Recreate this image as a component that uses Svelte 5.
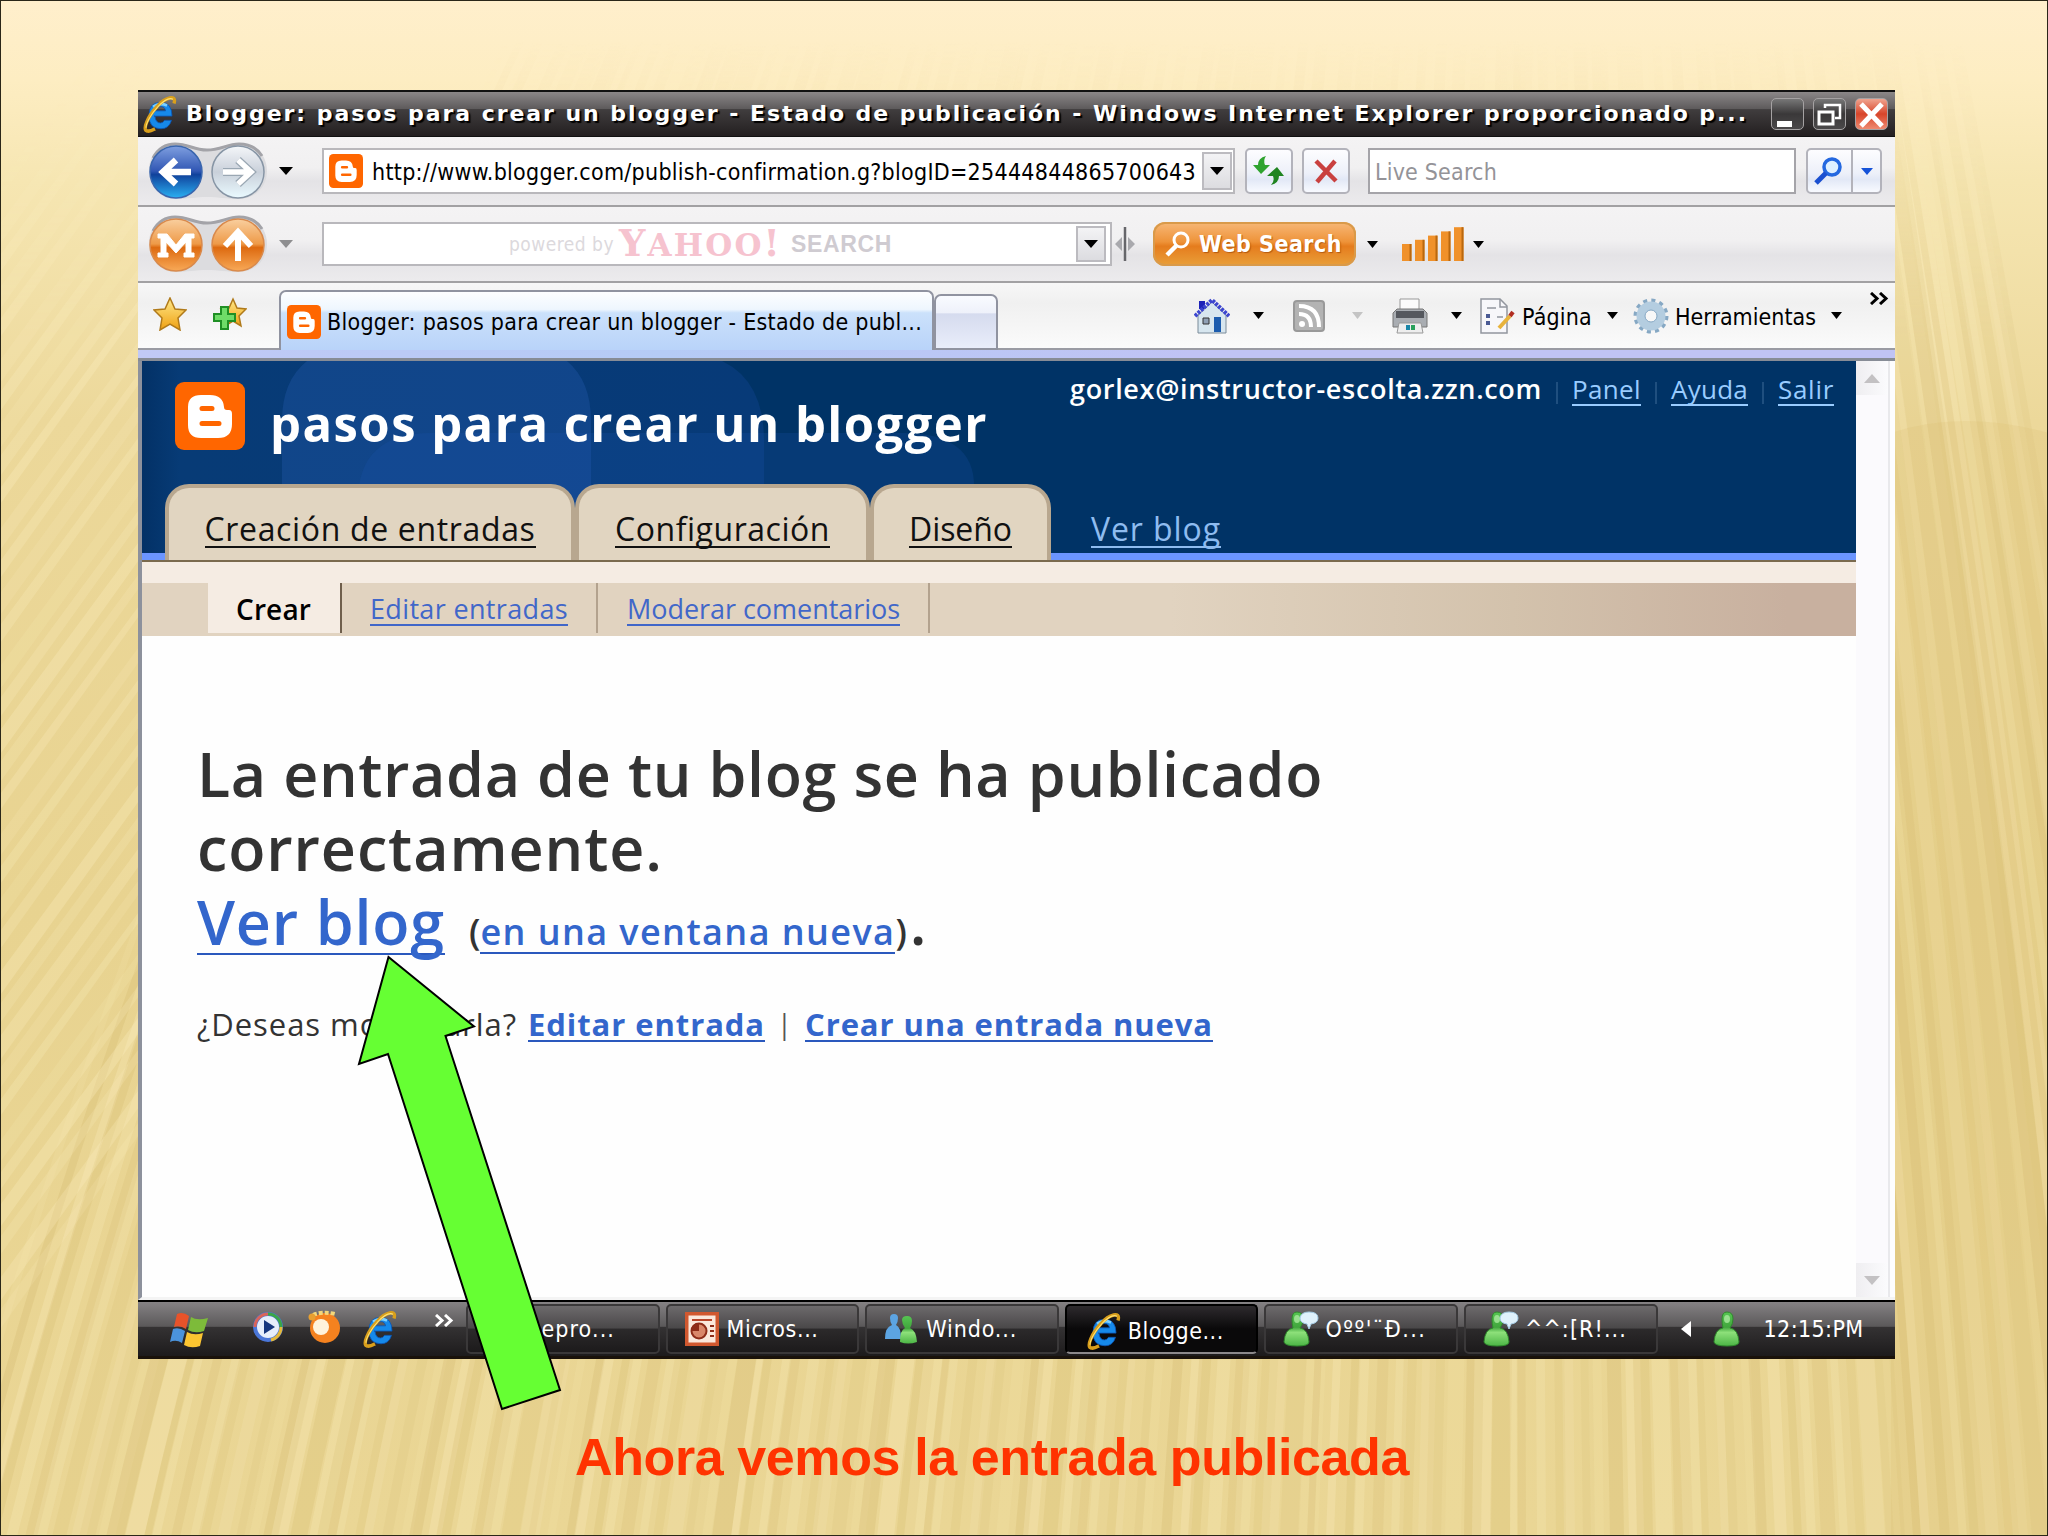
<script>
    // spreads the letters of a label so it takes up exactly `width` pixels
    function fit(node, width) {
        node.style.letterSpacing = '0px';
        const natural = node.getBoundingClientRect().width;
        const spacing = (width - natural) / node.textContent.length;
        node.style.letterSpacing = spacing + 'px';
        node.style.width = width + 'px';
    }

    const tabs = [
        { text: 'Creación de entradas', width: 331, box: 410 },
        { text: 'Configuración', width: 215, box: 295 },
        { text: 'Diseño', width: 103, box: 181 }
    ];

    const tasks = [
        { text: 'Repro...', icon: '', width: 88 },
        { text: 'Micros...', icon: 'ppt', width: 92 },
        { text: 'Windo...', icon: 'people', width: 91 },
        { text: 'Blogge...', icon: 'ie', width: 96, active: true },
        { text: 'Oºº\'¨Đ...', icon: 'chat', width: 101 },
        { text: '^^:[R!...', icon: 'chat', width: 102 }
    ];

    // rays of the slide background, leaning out from the middle of the slide
    const rays = [];
    for (let i = 0; i < 150; i++) {
        const x = -60 + i * 15 + ((i * 37) % 11);
        const lean = x < 1500 ? 560 - x * 0.36 : -(x - 1500) * 0.35;
        rays.push({
            x,
            w: 7 + ((i * 53) % 13),
            top: x + lean,
            bend: x + lean * 0.28,
            light: i % 2 === 0,
            opacity: 0.1 + ((i * 29) % 10) / 60
        });
    }
    // shallow diagonals that fill the upper left corner
    const diagonals = [];
    for (let i = 0; i < 34; i++) {
        diagonals.push({ y: 180 + i * 34 + ((i * 7) % 9), w: 10 + ((i * 5) % 9), opacity: 0.12 + ((i * 3) % 7) / 45 });
    }
</script>

{#snippet ie(w, h)}
    <svg width={w} height={h} viewBox="0 0 36 36" preserveAspectRatio="none">
        <path d="M12 20h18q0-13-11.500-13T7 19.500Q7 32 19 32q8 0 10.500-8h-7q-1.500 2.500-4 2.500-5 0-5.500-6.500zM13 15q1-4 5.500-4t5 4z" fill="#1689ea" stroke="#0b56b5" stroke-width=".8" />
        <path d="M11 11q7-4 14-1" stroke="#7ed0ff" stroke-width="2.500" fill="none" />
        <path d="M32 8c3-9-9-6-17 3C6 20 0 33 5 34c3 1 6-1 8-2" fill="none" stroke="#d99f1c" stroke-width="3.400" />
        <path d="M31 4c-4-2-10 2-15 7C9 18 4 27 4 31" fill="none" stroke="#ffe375" stroke-width="1" />
    </svg>
{/snippet}

{#snippet blogger(w, h)}
    <svg width={w} height={h} viewBox="0 0 70 68" preserveAspectRatio="none">
        <rect width="70" height="68" rx="9" fill="#ff6600" />
        <path d="M13 25q0-12 13-12h9q13 0 14 12 0 3 3 3h2q3 0 3 4v10q0 14-14 14H26q-13 0-13-13z" fill="#fff" />
        <path d="M27 26.500h10M27 41.500h17" stroke="#ff6600" stroke-width="5" stroke-linecap="round" />
    </svg>
{/snippet}

{#snippet caret(color)}
    <svg class="caret" width="14" height="8" viewBox="0 0 14 8"><path d="M0 0h14L7 8z" fill={color} /></svg>
{/snippet}

{#snippet chevrons(color)}
    <svg width="19" height="13" viewBox="0 0 19 13"><path d="M1 1l6 5.500-6 5.500M10 1l6 5.500-6 5.500" fill="none" stroke={color} stroke-width="3" /></svg>
{/snippet}

{#snippet buddy(chat)}
    <svg width="36" height="36" viewBox="0 0 36 36">
        <path d="M9 8q0-7 5-7 6 0 6 7 0 5-3 9 8 1 9 14 0 4-12 4T1 31q1-13 9-14Q9 13 9 8z" fill="url(#green)" stroke="#2f8a2c" />
        <ellipse cx="14" cy="8" rx="3" ry="4" fill="#b9f2ac" opacity=".7" />
        {#if chat}
            <path d="M17 7q1-6 9-6 9 0 9 6 0 5-7 6l-2 5-2-5q-7-1-7-6z" fill="#dff1fb" stroke="#a5cde6" />
        {/if}
    </svg>
{/snippet}

{#snippet pill(kind)}
    <svg width="122" height="58" viewBox="0 0 122 58">
        <path d="M2 29C2 11 14 1 28 1c14 0 18 6 32 6S80 1 92 1c16 0 28 12 28 28S108 57 92 57c-12 0-20-2-32-2s-20 2-32 2C14 57 2 45 2 29z" fill="#dcdcdf" />
        <path d="M6 16C12 5 20 2 28 2c14 0 18 6 32 6S80 2 92 2c10 0 18 4 23 12" fill="none" stroke="#a3a3a8" stroke-width="3" />
        <circle cx="29" cy="30" r="26" fill={kind === 'nav' ? 'url(#navblue)' : 'url(#orange)'} stroke={kind === 'nav' ? '#3a66ae' : '#d98a4c'} stroke-width="1.500" />
        <circle cx="91" cy="30" r="26" fill={kind === 'nav' ? 'url(#silver)' : 'url(#orange)'} stroke={kind === 'nav' ? '#8795a5' : '#d98a4c'} stroke-width="1.500" />
        {#if kind === 'nav'}
            <path d="M44 30H18M29 18L16 30l13 12" fill="none" stroke="#fff" stroke-width="6.500" />
            <path d="M76 30h26M91 18l13 12-13 12" fill="none" stroke="#9aa7b3" stroke-width="8" />
            <path d="M76 30h26M91 18l13 12-13 12" fill="none" stroke="#fff" stroke-width="5.500" />
        {:else}
            <path d="M11 19h9l9 11 9-11h9v4h-3v15h3v4H37v-4h2V27L29 38 19 27v11h2v4H11v-4h3V23h-3z" fill="#fff" stroke="#fff" />
            <path d="M91 46V19M78 31l13-14 13 14" fill="none" stroke="#fff" stroke-width="6" />
        {/if}
    </svg>
{/snippet}

<svg class="defs" width="0" height="0">
    <defs>
        <linearGradient id="navblue" x2="0" y2="1">
            <stop offset="0" stop-color="#7f9fe0" /><stop offset=".48" stop-color="#3157b4" />
            <stop offset=".55" stop-color="#10429c" /><stop offset="1" stop-color="#2ab0f2" />
        </linearGradient>
        <linearGradient id="silver" x2="0" y2="1">
            <stop offset="0" stop-color="#f4f6f9" /><stop offset=".5" stop-color="#c9d0da" />
            <stop offset="1" stop-color="#eafaff" />
        </linearGradient>
        <linearGradient id="orange" x2="0" y2="1">
            <stop offset="0" stop-color="#f9cf9f" /><stop offset=".48" stop-color="#ee9a48" />
            <stop offset=".55" stop-color="#dd6a10" /><stop offset="1" stop-color="#f8a957" />
        </linearGradient>
        <linearGradient id="green" x2="0" y2="1">
            <stop offset="0" stop-color="#56c552" /><stop offset=".45" stop-color="#41a63d" />
            <stop offset=".6" stop-color="#8de07a" /><stop offset="1" stop-color="#4cb545" />
        </linearGradient>
        <linearGradient id="gold" x2="0" y2="1">
            <stop offset="0" stop-color="#ffe98a" /><stop offset="1" stop-color="#efa012" />
        </linearGradient>
    </defs>
</svg>

<main>
    <svg class="rays" width="2048" height="1536" viewBox="0 0 2048 1536">
        <defs>
            <linearGradient id="fade" x2="0" y2="1">
                <stop offset="0" stop-color="#000" /><stop offset=".2" stop-color="#fff" />
            </linearGradient>
            <mask id="topfade"><rect y="40" width="2048" height="1500" fill="url(#fade)" /></mask>
        </defs>
        <g mask="url(#topfade)">
            {#each rays as r}
                <path
                    d="M{r.top} 0Q{r.bend} 900 {r.x} 1536h{r.w}Q{r.bend + r.w} 900 {r.top + r.w} 0z"
                    fill={r.light ? '#fff3c8' : '#cfb466'}
                    opacity={r.opacity}
                />
            {/each}
            {#each diagonals as d}
                <path d="M0 {d.y}L140 {d.y - 190}v{d.w}L0 {d.y + d.w + 6}z" fill="#fff3c8" opacity={d.opacity} />
            {/each}
            <path d="M1890 432Q1960 408 2048 432V1536H1890z" fill="#d2b665" opacity=".16" />
        </g>
    </svg>

    <div class="window">
        <header class="titlebar">
            {@render ie(36, 38)}
            <span class="title" use:fit={1562}>Blogger: pasos para crear un blogger - Estado de publicación - Windows Internet Explorer proporcionado p...</span>
            <div class="winbtns">
                <span class="wb"><svg width="32" height="32"><path d="M5 22h15v6H5z" fill="#fff" /></svg></span>
                <span class="wb"><svg width="32" height="32" fill="none" stroke="#fff"><path d="M5 13h14v12H5z" stroke-width="3" /><path d="M11 9V6h15v13h-5" stroke-width="2.500" /></svg></span>
                <span class="wb close"><svg width="32" height="32"><path d="M5 5l21 22M26 5L5 27" stroke="#fff" stroke-width="5" /></svg></span>
            </div>
        </header>

        <div class="bar nav">
            {@render pill('nav')}
            {@render caret('#000')}
            <div class="address">
                {@render blogger(34, 34)}
                <span class="ui" use:fit={824}>http://www.blogger.com/publish-confirmation.g?blogID=25444844865700643</span>
                <span class="drop">{@render caret('#000')}</span>
            </div>
            <span class="btn">
                <svg width="32" height="30" viewBox="0 0 32 30">
                    <path d="M13 0Q5 2 5 9H0l8 9 9-9h-5q-2-5 1-9z" fill="#2fa32f" />
                    <path d="M18 29q8-2 8-9h5l-7-9-10 9h6q2 5-2 9z" fill="#1f8420" />
                </svg>
            </span>
            <span class="btn stop">
                <svg width="28" height="26" viewBox="0 0 28 26"><path d="M4 3l20 20M23 3L5 24" stroke="#c9403f" stroke-width="4.500" /></svg>
            </span>
            <div class="live"><span class="ui" use:fit={122}>Live Search</span></div>
            <div class="btn go">
                <svg width="30" height="30" viewBox="0 0 30 30"><circle cx="18" cy="11" r="8" fill="#dff0ff" stroke="#2468e0" stroke-width="3.500" /><path d="M12 17L2 27" stroke="#1a4fd0" stroke-width="5" /></svg>
                <span class="arrow"><svg width="12" height="7"><path d="M0 0h12L6 7z" fill="#1552d8" /></svg></span>
            </div>
        </div>

        <div class="bar yahoo">
            {@render pill('yahoo')}
            {@render caret('#8e8e90')}
            <div class="ysearch">
                <span class="powered" use:fit={105}>powered by</span>
                <span class="logo" use:fit={163}><b>Y</b>AHOO<b>!</b></span>
                <span class="search" use:fit={101}>SEARCH</span>
                <span class="drop">{@render caret('#000')}</span>
            </div>
            <svg class="split" width="20" height="34" viewBox="0 0 20 34"><path d="M10 0v34" stroke="#66666a" stroke-width="2.500" /><path d="M7 10v14L0 17zM13 10v14l7-7z" fill="#a9a9ad" /></svg>
            <div class="web">
                <svg width="26" height="26" viewBox="0 0 26 26"><circle cx="16" cy="9" r="7" fill="none" stroke="#fff" stroke-width="3" /><path d="M11 15L2 24" stroke="#fff" stroke-width="4.500" /></svg>
                <span use:fit={143}>Web Search</span>
            </div>
            <svg class="c1" width="11" height="7"><path d="M0 0h11L5.500 7z" /></svg>
            <svg class="signal" width="62" height="34" viewBox="0 0 62 34">
                {#each [0, 1, 2, 3, 4] as i}
                    <rect x={i * 13} y={17 - i * 4.2} width="9.500" height={17 + i * 4.2} fill="#f0912a" />
                    <rect x={i * 13 + 7.5} y={17 - i * 4.2} width="2" height={17 + i * 4.2} fill="#b9680f" />
                {/each}
            </svg>
            <svg class="c2" width="11" height="7"><path d="M0 0h11L5.500 7z" /></svg>
        </div>

        <div class="tabrow">
            <div class="favs">
                <svg width="34" height="34" viewBox="0 0 34 34"><path d="M17 1l5 11 11 1-8 8 2 12-10-6-10 6 2-12-8-8 11-1z" fill="url(#gold)" stroke="#b07a1a" stroke-width="1.500" /></svg>
                <svg width="34" height="34" viewBox="0 0 34 34"><path d="M20 2l4 9 9 1-7 7 2 10-8-5-8 5 2-10-6-7 8-1z" fill="url(#gold)" stroke="#b07a1a" stroke-width="1.500" /><path d="M8 10h7v7h7v7h-7v8H8v-8H1v-7h7z" fill="#6fdc68" stroke="#1f8f24" stroke-width="2" /></svg>
            </div>
            <div class="tab">
                {@render blogger(34, 34)}
                <span class="ui" use:fit={595}>Blogger: pasos para crear un blogger - Estado de publ...</span>
            </div>
            <div class="newtab"></div>
            <div class="tools">
                <svg width="36" height="36" viewBox="0 0 36 36"><path d="M5 3h6v8H5z" fill="#1d23b8" /><path d="M4 17L18 4l14 13v18H4z" fill="#d7e6ef" stroke="#7a8b99" /><path d="M1 18L18 2l17 16" fill="none" stroke="#3c46cf" stroke-width="4" stroke-dasharray="3 1" /><path d="M20 19h7v15h-7z" fill="#1c5cae" /><path d="M9 20h6v6H9z" fill="#8fa0b5" stroke="#333" /></svg>
                <svg class="t1" width="11" height="7"><path d="M0 0h11L5.500 7z" /></svg>
                <svg class="t2" width="32" height="32" viewBox="0 0 32 32"><rect x="1" y="1" width="30" height="30" rx="3" fill="#b3b3b3" stroke="#999" stroke-width="2" /><circle cx="9" cy="24" r="3" fill="#fff" /><path d="M6 14q12 0 12 13M6 6q20 0 20 21" fill="none" stroke="#fff" stroke-width="4" /></svg>
                <svg class="t3" width="11" height="7"><path d="M0 0h11L5.500 7z" fill="#c4c4c4" /></svg>
                <svg class="t4" width="36" height="36" viewBox="0 0 36 36"><path d="M8 1h19v13H8z" fill="#fbfbfb" stroke="#999" /><path d="M1 15l4-4h26l4 4v14H1z" fill="#a9adb2" stroke="#777" /><path d="M4 13h28v7H4z" fill="#55585e" /><path d="M7 25h22l2 10H5z" fill="#eee" stroke="#999" /><path d="M14 27h4v5h-4z" fill="#1b86a8" /><path d="M19 27h4v5h-4z" fill="#28a05a" /></svg>
                <svg class="t5" width="11" height="7"><path d="M0 0h11L5.500 7z" /></svg>
                <svg class="t6" width="36" height="36" viewBox="0 0 36 36"><path d="M2 1h19l7 7v27H2z" fill="#f7f7fa" stroke="#92969e" stroke-width="1.500" /><path d="M21 1v8h7M8 10h9M18 19h6" fill="none" stroke="#92969e" stroke-width="1.500" /><path d="M7 16h4v4H7zM7 23h4v4H7z" fill="#4a5a94" /><path d="M31 18L20 30" stroke="#e8b33c" stroke-width="4" /><path d="M34 14l-3 4" stroke="#b02c20" stroke-width="4" /></svg>
                <span class="ui t7" use:fit={70}>Página</span>
                <svg class="t8" width="11" height="7"><path d="M0 0h11L5.500 7z" /></svg>
                <svg class="t9" width="36" height="38" viewBox="0 0 36 38"><circle cx="18" cy="19" r="15.500" fill="none" stroke="#86a8c4" stroke-width="4" stroke-dasharray="4 4.100" /><circle cx="18" cy="19" r="10" fill="none" stroke="#b4cde0" stroke-width="9" /><circle cx="18" cy="19" r="6" fill="#f8f8f8" stroke="#86a8c4" /></svg>
                <span class="ui t10" use:fit={141}>Herramientas</span>
                <svg class="t11" width="11" height="7"><path d="M0 0h11L5.500 7z" /></svg>
                <span class="more">{@render chevrons('#000')}</span>
            </div>
        </div>
        <div class="strip"></div>

        <div class="viewport">
            <div class="page">
                <div class="masthead">
                    <!-- oversized ghost of the logo behind the blog name -->
                    <svg class="ghost" width="860" height="192" viewBox="0 0 860 192">
                        <defs>
                            <linearGradient id="edge"><stop offset="0" stop-color="#033166" /><stop offset=".06" stop-color="#073b76" /><stop offset="1" stop-color="#073a78" /></linearGradient>
                        </defs>
                        <path d="M0 0H580Q622 20 622 80V192H0z" fill="url(#edge)" />
                        <path d="M140 192V60Q140 20 165 0H425Q449 20 449 60V192z" fill="#2157a8" opacity=".4" />
                        <path d="M216 192V140Q216 72 290 72H760Q832 72 832 125V192z" fill="#1a55b0" opacity=".22" />
                    </svg>
                    <div class="top">
                        {@render blogger(70, 68)}
                        <h1 use:fit={718}>pasos para crear un blogger</h1>
                        <div class="account">
                            <b use:fit={472}>gorlex@instructor-escolta.zzn.com</b>
                            <i></i><a use:fit={69} href="#panel">Panel</a>
                            <i></i><a use:fit={77} href="#ayuda">Ayuda</a>
                            <i></i><a use:fit={56} href="#salir">Salir</a>
                        </div>
                    </div>
                    <nav>
                        {#each tabs as t}
                            <div class="mtab" style="width: {t.box}px"><a use:fit={t.width} href="#tab">{t.text}</a></div>
                        {/each}
                        <a class="view" use:fit={130} href="#blog">Ver blog</a>
                    </nav>
                </div>
                <div class="subnav">
                    <div class="cur"><b use:fit={75}>Crear</b></div>
                    <div class="sub"><a use:fit={198} href="#editar">Editar entradas</a></div>
                    <div class="sub"><a use:fit={273} href="#moderar">Moderar comentarios</a></div>
                </div>
                <div class="body">
                    <h2><span use:fit={1126}>La entrada de tu blog se ha publicado</span></h2>
                    <h2><span use:fit={466}>correctamente.</span></h2>
                    <h2 class="see">
                        <a use:fit={248} href="#ver">Ver blog</a><small>(</small><a class="small" use:fit={415} href="#ventana">en una ventana nueva</a><small>)</small><span class="dot">.</span>
                    </h2>
                    <p>
                        <span use:fit={320}>¿Deseas modificarla?</span>
                        <a use:fit={237} href="#entrada">Editar entrada</a>
                        <span class="sep">|</span>
                        <a use:fit={408} href="#nueva">Crear una entrada nueva</a>
                    </p>
                </div>
            </div>
            <div class="scroll">
                <span><svg width="16" height="9"><path d="M8 0l8 9H0z" fill="#c3c1c3" /></svg></span>
                <span><svg width="16" height="9"><path d="M0 0h16L8 9z" fill="#c3c1c3" /></svg></span>
            </div>
        </div>

        <footer class="taskbar">
            <svg class="win" width="40" height="36" viewBox="0 0 40 36"><path d="M8 2q6-3 12 2l-3 13q-6-4-12-2z" fill="#e8532a" /><path d="M22 5q6 4 17 1l-4 13q-9 3-16-1z" fill="#7dbb3a" /><path d="M4 17q6-2 12 2l-3 12q-6-4-12-1z" fill="#4b93dc" /><path d="M18 20q7 4 16 1l-3 13q-9 3-16-1z" fill="#fcc531" /></svg>
            <svg class="wmp" width="32" height="32" viewBox="0 0 32 32"><circle cx="16" cy="16" r="13" fill="#e6eefb" stroke="#4a76d8" stroke-width="4" /><path d="M16 3a13 13 0 0 1 13 13" fill="none" stroke="#3aa648" stroke-width="3" /><path d="M3 16A13 13 0 0 1 16 3" fill="none" stroke="#d9645a" stroke-width="3" /><path d="M29 16a13 13 0 0 1-10 13" fill="none" stroke="#e5b93a" stroke-width="3" /><path d="M12 9l11 7-11 7z" fill="#16367e" /></svg>
            <svg class="orb" width="34" height="34" viewBox="0 0 34 34"><circle cx="18" cy="18" r="15" fill="#f5821f" /><circle cx="14" cy="17" r="8" fill="#fff3dc" /><path d="M6 5q10-4 22-1" fill="none" stroke="#f3d77a" stroke-width="4" stroke-dasharray="4 2" /><circle cx="5" cy="7" r="3.500" fill="#e8a030" /></svg>
            {@render ie(36, 38)}
            <span class="chev">{@render chevrons('#fff')}</span>
            <div class="tasks">
                {#each tasks as t}
                    <div class="task" class:active={t.active}>
                        <span class="ticon">
                            {#if t.icon === 'ppt'}
                                <svg width="34" height="34" viewBox="0 0 34 34"><rect x="1.500" y="1.500" width="31" height="31" fill="#fbe8dc" stroke="#d1582f" stroke-width="4" /><path d="M7 8h20" stroke="#b8452a" stroke-width="2" /><circle cx="14" cy="19" r="7.500" fill="#d9876a" stroke="#8e2c18" stroke-width="2" /><path d="M14 19v-8a8 8 0 0 0-8 8z" fill="#8e2c18" /><path d="M25 14h4M25 19h4M25 24h4" stroke="#8e2c18" stroke-width="2" /></svg>
                            {:else if t.icon === 'people'}
                                <svg width="34" height="32" viewBox="0 0 34 32"><path d="M6 5q0-4 4-4t4 4q0 4-2 7 5 2 5 14H1q0-12 7-14-2-3-2-7z" fill="#5ca4e2" /><path d="M18 7q0-4 5-4t5 5q0 4-2 7 6 2 7 14-9 3-17 0 0-12 5-14-3-4-3-8z" fill="url(#green)" /></svg>
                            {:else if t.icon === 'ie'}
                                {@render ie(36, 38)}
                            {:else if t.icon === 'chat'}
                                {@render buddy(true)}
                            {/if}
                        </span>
                        <span use:fit={t.width}>{t.text}</span>
                    </div>
                {/each}
            </div>
            <svg class="left" width="10" height="16"><path d="M10 0v16L0 8z" fill="#fff" /></svg>
            {@render buddy(false)}
            <span class="clock" use:fit={100}>12:15:PM</span>
        </footer>
    </div>

    <div class="caption" use:fit={834}>Ahora vemos la entrada publicada</div>

    <svg class="pointer" width="206" height="456" viewBox="-1 -1 206 456">
        <path d="M30.500 1L116 70.500 87.500 80 202 434 144 453 30 98 1 108z" fill="#66ff33" stroke="#000" stroke-width="2" />
    </svg>
</main>

<style>
    :global(body) {
        margin: 0;
        overflow: hidden;
    }
    main {
        position: relative;
        box-sizing: border-box;
        width: 2048px;
        height: 1536px;
        padding: 89px 0 0 137px;
        border: 1px solid #2a2618;
        background: linear-gradient(#ffefcc 0, #fdedc2 80px, #f6e6b2 180px, #ecd89a 420px, #e8d390 900px, #ead695 1536px);
        font-family: "DejaVu Sans Condensed", "DejaVu Sans", sans-serif;
        overflow: hidden;
    }
    main span, main a, main b, h1 {
        white-space: pre;
    }
    svg {
        display: block;
        flex: none;
    }
    .defs, .rays, .ghost {
        position: absolute;
        left: 0;
        top: 0;
    }
    .window {
        position: relative;
        width: 1757px;
        height: 1269px;
        display: flex;
        flex-direction: column;
        background: #fff;
    }
    .titlebar {
        display: flex;
        align-items: center;
        box-sizing: border-box;
        height: 47px;
        padding-left: 4px;
        border-top: 2px solid #111;
        border-bottom: 1px solid #111;
        background: linear-gradient(#8b8788, #5e5b5c 38%, #403d3e 40%, #231f20);
    }
    .title {
        margin-left: 8px;
        color: #fff;
        font: bold 22px/42px "DejaVu Sans", sans-serif;
        text-shadow: 2px 2px 1px #000;
    }
    .winbtns {
        display: flex;
        gap: 9px;
        margin-left: 23px;
    }
    .wb {
        width: 31px;
        height: 30px;
        border: 1.5px solid #a5a2a3;
        border-radius: 5px;
        background: linear-gradient(#777, #3a3839 50%, #4b494a);
        overflow: hidden;
    }
    .close {
        background: linear-gradient(#f0a48f, #d8452a 50%, #ee8a70);
    }
    .bar {
        display: flex;
        align-items: center;
        box-sizing: border-box;
        border-bottom: 2px solid #a2a1a3;
        background: linear-gradient(#f4f3f4, #f1f0f1 45%, #e4e3e6 65%, #ecebed);
        padding-left: 9px;
    }
    .nav { height: 70px; }
    .yahoo { height: 76px; }
    .caret { margin-left: 10px; }
    .ui {
        font-size: 23px;
        line-height: 30px;
        color: #000;
    }
    .address, .ysearch, .live {
        display: flex;
        align-items: center;
        box-sizing: border-box;
        height: 46px;
        margin-left: 29px;
        border: 2px solid #b9b8bc;
        background: #fff;
    }
    .address {
        width: 913px;
        padding-left: 5px;
    }
    .address .ui { margin: 2px 0 0 9px; }
    .drop {
        display: flex;
        align-items: center;
        justify-content: center;
        box-sizing: border-box;
        width: 30px;
        height: 38px;
        margin-left: 6px;
        border: 2px solid #bcbbc0;
        background: linear-gradient(#f3f3f5, #dcdce0);
    }
    .drop .caret { margin: 0; }
    .btn {
        display: flex;
        align-items: center;
        justify-content: center;
        box-sizing: border-box;
        width: 48px;
        height: 46px;
        margin-left: 10px;
        border: 2px solid #b3b3bb;
        border-radius: 5px;
        background: linear-gradient(#fdfdff, #edf0f9 55%, #e2e8f6 70%, #f8faff);
    }
    .stop { margin-left: 9px; }
    .live {
        width: 428px;
        margin-left: 18px;
        padding-left: 5px;
        border-color: #a5a4a9;
    }
    .live .ui {
        margin-top: 2px;
        color: #949398;
    }
    .go {
        width: 76px;
        justify-content: flex-start;
        padding-left: 6px;
    }
    .arrow {
        display: flex;
        align-items: center;
        justify-content: center;
        width: 28px;
        height: 42px;
        margin-left: 7px;
        border-left: 2px solid #b3b3bb;
    }
    .ysearch {
        width: 790px;
        height: 44px;
        padding-left: 185px;
    }
    .ysearch .drop {
        margin-left: 184px;
        height: 36px;
    }
    .powered {
        color: #dcd9dd;
        font-size: 19px;
    }
    .logo {
        margin-left: 5px;
        color: #f6c3cf;
        font: bold 31px/40px "DejaVu Serif", serif;
    }
    .logo b { font-size: 37px; }
    .search {
        margin-left: 9px;
        color: #cfcbd1;
        font: bold 23px/40px "Liberation Sans", sans-serif;
    }
    .split { margin-left: 3px; }
    .web {
        display: flex;
        align-items: center;
        box-sizing: border-box;
        width: 203px;
        height: 44px;
        margin-left: 18px;
        padding-left: 12px;
        border-radius: 12px;
        background: linear-gradient(#f7b878, #ee9339 45%, #e57c1d 55%, #e9a03a);
        box-shadow: inset 0 0 0 2px #d99a4a;
        color: #fff;
        font-weight: bold;
        font-size: 23px;
        text-shadow: 1px 1px 1px #b55a10;
    }
    .web span { margin-left: 8px; }
    .c1 { margin-left: 11px; }
    .signal { margin-left: 24px; }
    .c2 { margin-left: 9px; }
    .tabrow {
        display: flex;
        height: 67px;
        background: linear-gradient(#f7f7f7, #f0f0f0 30%, #fbfbfb);
    }
    .favs {
        display: flex;
        align-items: center;
        gap: 26px;
        box-sizing: border-box;
        width: 141px;
        padding: 0 0 3px 15px;
        border-bottom: 2px solid #9a9ba3;
    }
    .tab {
        display: flex;
        align-items: center;
        box-sizing: border-box;
        width: 655px;
        margin-top: 7px;
        padding: 2px 0 0 6px;
        border: 2px solid #9093a0;
        border-bottom: 0;
        border-radius: 7px 7px 0 0;
        background: linear-gradient(#fdfeff, #eef6fe 30%, #cbe1fb 36%, #b9d3f9);
    }
    .tab .ui { margin-left: 6px; }
    .newtab {
        box-sizing: border-box;
        width: 64px;
        margin-top: 11px;
        border: 2px solid #9093a0;
        border-radius: 7px 7px 0 0;
        background: linear-gradient(#f9fbff, #eef1fa 33%, #d5dbee 34%, #e9edfa);
    }
    .tools {
        display: flex;
        flex: 1;
        align-items: center;
        padding-left: 196px;
        border-bottom: 2px solid #9a9ba3;
    }
    .tools .ui { margin-top: 2px; }
    .t1 { margin-left: 23px; }
    .t2 { margin-left: 29px; }
    .t3 { margin-left: 27px; }
    .t4 { margin-left: 29px; }
    .t5 { margin-left: 23px; }
    .t6 { margin-left: 17px; }
    .t7 { margin-left: 7px; }
    .t8 { margin-left: 15px; }
    .t9 { margin-left: 15px; }
    .t10 { margin-left: 6px; }
    .t11 { margin-left: 15px; }
    .more { margin: -35px 0 0 28px; }
    .strip {
        height: 8px;
        border-bottom: 3px solid #878c96;
        background: linear-gradient(90deg, #c1c9f6, #b5cbf6 30%, #c0c3f4 60%);
    }
    .viewport {
        display: flex;
        box-sizing: border-box;
        height: 939px;
        border-left: 4px solid #8d919c;
        border-bottom: 3px solid #f4f4f4;
        background: #fdfdfe;
    }
    .page {
        width: 1714px;
        background: #fefefe;
        font-family: "Open Sans", "Noto Sans", sans-serif;
    }
    .masthead {
        position: relative;
        box-sizing: border-box;
        height: 201px;
        border-bottom: 2px solid #7a6a4e;
        background: #003366;
    }
    .top, nav { position: relative; }
    .top {
        display: flex;
        height: 123px;
    }
    .top > svg { margin: 21px 0 0 33px; }
    h1 {
        flex: none;
        margin: 28px 0 0 25px;
        color: #fff;
        font-size: 49px;
        line-height: 68px;
        font-weight: 700;
    }
    .account {
        display: flex;
        margin: 10px 0 0 82px;
        color: #fff;
        font-size: 26px;
        line-height: 36px;
        height: 36px;
    }
    .account b {
        font-size: 27px;
        font-weight: 600;
    }
    .account a {
        box-sizing: border-box;
        height: 35px;
        color: #99ccff;
        text-decoration: none;
        border-bottom: 2px solid #99ccff;
    }
    .account i {
        width: 2px;
        height: 22px;
        margin: 11px 14px 0;
        background: #1f4f7f;
    }
    nav {
        display: flex;
        height: 76px;
        padding-left: 23px;
        background: linear-gradient(#6b95ff, #6b95ff) 0 69px / 100% 7px no-repeat;
    }
    .mtab {
        display: flex;
        justify-content: center;
        box-sizing: border-box;
        border: 4px solid #b8a78f;
        border-bottom: 0;
        border-radius: 24px 24px 0 0;
        background: #e1d5c1;
    }
    nav a {
        box-sizing: border-box;
        height: 47px;
        margin-top: 13px;
        color: #111;
        font-size: 32px;
        line-height: 56px;
        text-decoration: none;
        border-bottom: 2px solid #111;
    }
    nav a.view {
        margin: 17px 0 0 40px;
        color: #8ebcf0;
        border-color: #8ebcf0;
    }
    .subnav {
        display: flex;
        box-sizing: border-box;
        height: 74px;
        padding-left: 66px;
        border-top: 21px solid #f5ece3;
        background: linear-gradient(90deg, #e1d3c0 0, #e1d3c0 60%, #d3c2ac 80%, #c8b09f 96%);
    }
    .cur {
        box-sizing: border-box;
        width: 134px;
        height: 50px;
        padding-left: 28px;
        border-right: 2px solid #6f5f4c;
        background: #f5ece3;
        color: #000;
        font-size: 28px;
        line-height: 52px;
    }
    .cur b { font-weight: 600; }
    .sub {
        height: 50px;
        padding: 0 28px;
        border-right: 2px solid #b3a28e;
    }
    .sub + .sub { padding-left: 29px; }
    .cur b, .sub a { display: inline-block; }
    .sub a {
        box-sizing: border-box;
        height: 43px;
        color: #4167c9;
        font-size: 27px;
        line-height: 52px;
        text-decoration: none;
        border-bottom: 2px solid #4167c9;
    }
    .body {
        padding: 101px 0 0 55px;
        color: #333;
    }
    h2 {
        display: flex;
        margin: 0;
        height: 74px;
        font-size: 61px;
        line-height: 74px;
        font-weight: 600;
    }
    .see { align-items: baseline; }
    .body a {
        color: #3366cc;
        text-decoration: none;
        background: linear-gradient(#2a58bd, #2a58bd) 0 100% / 100% 2px no-repeat;
    }
    .see a {
        height: 70px;
    }
    .see small {
        margin-left: 24px;
        font-size: 36px;
    }
    .see .small {
        height: 48px;
        font-size: 36px;
        line-height: 52px;
    }
    .see .small + small { margin-left: 0; }
    .dot { margin-left: 3px; }
    p {
        display: flex;
        margin: 45px 0 0;
        font-size: 31px;
        line-height: 40px;
    }
    p a {
        margin-left: 11px;
        height: 38px;
        font-weight: 700;
    }
    .sep {
        width: 8px;
        margin: 0 11px 0 12px;
        color: #555;
        font-size: 27px;
    }
    .sep + a { margin-left: 9px; }
    .scroll {
        display: flex;
        flex-direction: column;
        justify-content: space-between;
        box-sizing: border-box;
        width: 34px;
        border-right: 2px solid #e9e9ec;
        background: #fbfafd;
    }
    .scroll span {
        display: flex;
        align-items: center;
        justify-content: center;
        height: 34px;
        background: linear-gradient(90deg, #efeef1, #fbfbfd);
    }
    .taskbar {
        display: flex;
        align-items: center;
        box-sizing: border-box;
        height: 59px;
        margin-top: auto;
        border-top: 2px solid #000;
        border-bottom: 3px solid #1a120a;
        background: linear-gradient(#858284, #5b595a 45%, #343233 47%, #1d1b1c);
    }
    .win { margin: 2px 0 0 31px; }
    .wmp { margin: -4px 0 0 43px; }
    .orb { margin: -4px 21px 0 23px; }
    .chev {
        width: 19px;
        margin: -18px 12px 0 37px;
    }
    .tasks {
        display: flex;
        gap: 6px;
    }
    .task {
        display: flex;
        align-items: center;
        box-sizing: border-box;
        width: 193.6px;
        height: 50px;
        padding-left: 17px;
        border: 2px solid #3a3839;
        border-radius: 5px;
        background: linear-gradient(#6d6a6c, #4a4849 48%, #2c2a2b 50%, #1c1a1b);
        color: #fff;
        font-size: 23px;
    }
    .active {
        border-color: #000;
        border-bottom-color: #8c898b;
        background: linear-gradient(#2d2a2d, #0a090a 50%);
        padding: 3px 0 0 19px;
    }
    .ticon {
        width: 36px;
        margin-right: 6px;
    }
    .left { margin: 0 22px 0 23px; }
    .clock {
        margin-left: 15px;
        color: #fff;
        font-size: 23px;
    }
    .caption {
        position: relative;
        display: inline-block;
        margin: 68px 0 0 437px;
        color: #ff3300;
        font: bold 52px/60px "Liberation Sans", Arial, sans-serif;
        white-space: nowrap;
    }
    .pointer {
        position: absolute;
        left: 356px;
        top: 954px;
    }
</style>
